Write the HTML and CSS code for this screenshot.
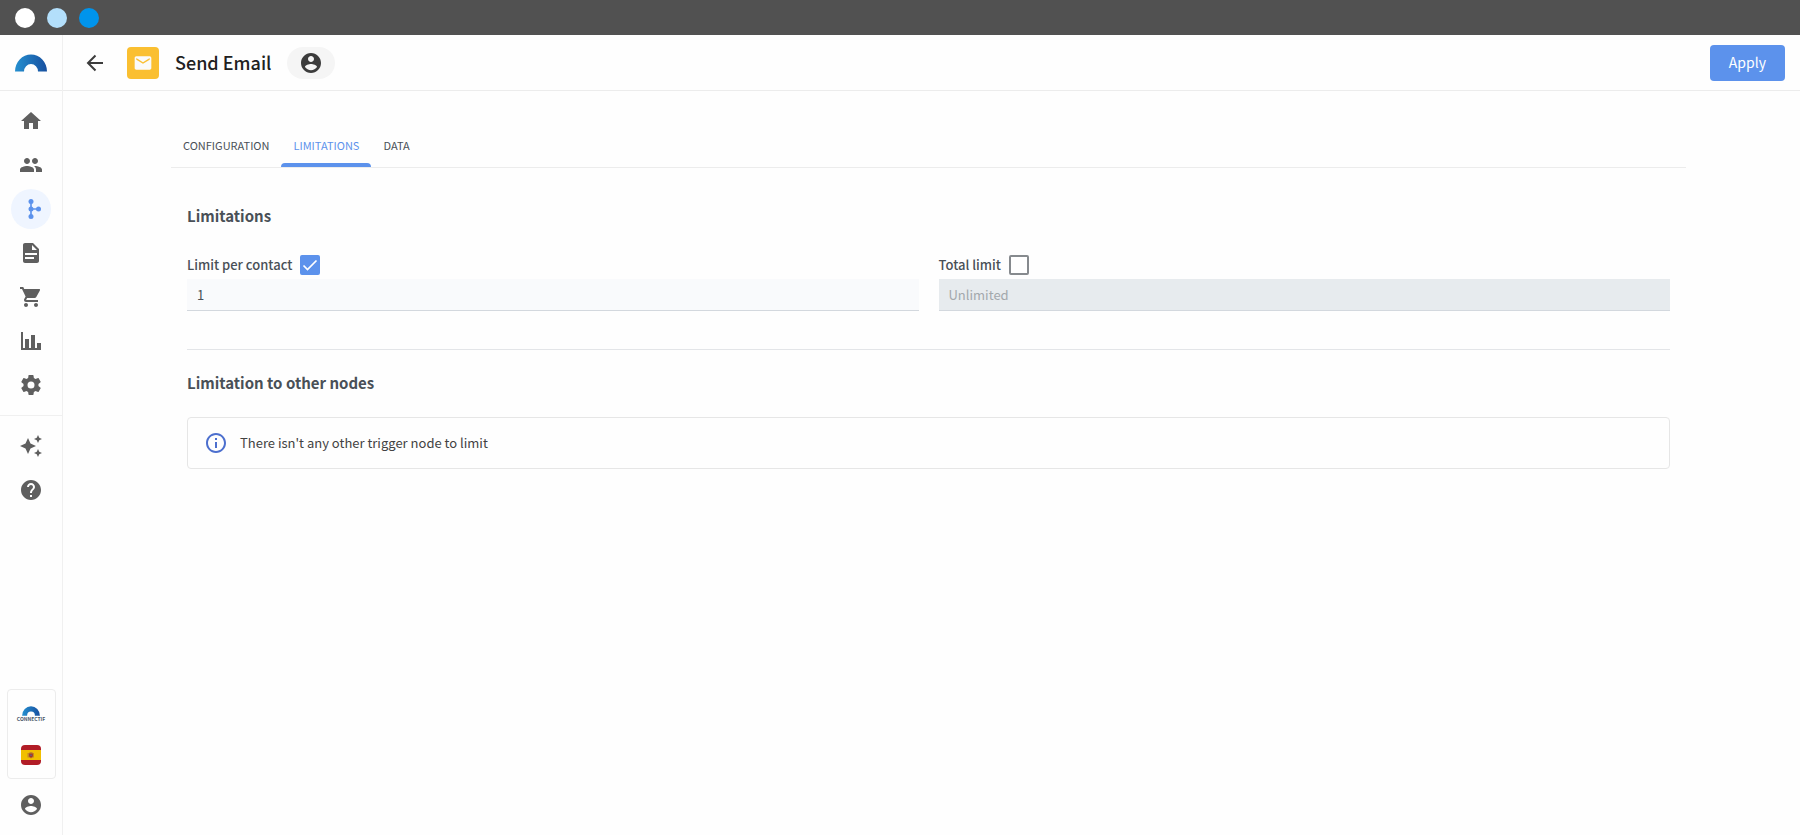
FILE: index.html
```html
<!DOCTYPE html>
<html lang="en">
<head>
    <meta charset="UTF-8">
    <meta name="viewport" content="width=device-width, initial-scale=1.0">
    <title>Send Email - Connectif</title>
    <link rel="stylesheet" href="styles.css">
</head>
<body>
    <!-- Window bar -->
    <div class="window-bar">
        <span class="dot dot-white"></span>
        <span class="dot dot-light"></span>
        <span class="dot dot-blue"></span>
    </div>

    <div class="app">
        <!-- Sidebar -->
        <aside class="sidebar">
            <a class="logo" href="#" aria-label="Connectif">
                <svg width="32" height="18" viewBox="0 0 32 18">
                    <defs>
                        <linearGradient id="arc" x1="0" y1="0" x2="1" y2="0">
                            <stop offset="0" stop-color="#2590d0"/>
                            <stop offset="1" stop-color="#174f9f"/>
                        </linearGradient>
                    </defs>
                    <path fill="url(#arc)" d="M0 17.500A16 17 0 0 1 32 17.500H23A7 7.500 0 0 0 9 17.500Z"/>
                </svg>
            </a>

            <nav class="nav">
                <a class="nav-item" href="#" aria-label="Home">
                    <svg viewBox="0 0 24 24"><path d="M10 20v-6h4v6h5v-8h3L12 3 2 12h3v8z"/></svg>
                </a>
                <a class="nav-item" href="#" aria-label="Contacts">
                    <svg viewBox="0 0 24 24"><path d="M16 11c1.660 0 2.990-1.340 2.990-3S17.660 5 16 5s-3 1.340-3 3 1.340 3 3 3zm-8 0c1.660 0 2.990-1.340 2.990-3S9.660 5 8 5 5 6.340 5 8s1.340 3 3 3zm0 2c-2.330 0-7 1.170-7 3.500V19h14v-2.500c0-2.330-4.670-3.500-7-3.500zm8 0c-.29 0-.62.02-.97.05 1.160.84 1.970 1.970 1.970 3.450V19h6v-2.500c0-2.330-4.670-3.500-7-3.500z"/></svg>
                </a>
                <a class="nav-item active" href="#" aria-label="Workflows">
                    <svg viewBox="0 0 24 24"><circle cx="12" cy="3" r="3"/><circle cx="12" cy="12" r="3"/><circle cx="12" cy="21" r="3"/><circle cx="21" cy="12" r="3"/><path d="M11 3h2v8h8v2h-8v8h-2z"/></svg>
                </a>
                <a class="nav-item" href="#" aria-label="Content">
                    <svg viewBox="0 0 24 24"><path d="M14 2H6c-1.100 0-2 .9-2 2v16c0 1.100.9 2 2 2h12c1.100 0 2-.9 2-2V8zm-1 2l5 5h-5zM6 12h12v2H6zm0 4h9v2H6z" fill-rule="evenodd"/></svg>
                </a>
                <a class="nav-item" href="#" aria-label="Store">
                    <svg viewBox="0 0 24 24"><path d="M7 18c-1.100 0-1.990.9-1.990 2S5.900 22 7 22s2-.9 2-2-.9-2-2-2zM1 2v2h2l3.600 7.590-1.350 2.450c-.16.28-.25.61-.25.96 0 1.100.9 2 2 2h12v-2H7.420c-.14 0-.25-.11-.25-.25l.03-.12.9-1.630h7.450c.75 0 1.410-.41 1.750-1.030l3.580-6.490A1 1 0 0 0 20 4H5.210l-.94-2H1zm16 16c-1.100 0-1.990.9-1.990 2s.89 2 1.990 2 2-.9 2-2-.9-2-2-2z"/></svg>
                </a>
                <a class="nav-item" href="#" aria-label="Reports">
                    <svg viewBox="0 0 24 24"><path d="M22 21H2V3h2v16h2v-9h4v9h2V6h4v13h2v-5h4z"/></svg>
                </a>
                <a class="nav-item" href="#" aria-label="Settings">
                    <svg viewBox="0 0 24 24"><path d="M12 15.500A3.500 3.500 0 0 1 8.500 12 3.500 3.500 0 0 1 12 8.500a3.500 3.500 0 0 1 3.500 3.500 3.500 3.500 0 0 1-3.500 3.500m7.430-2.530c.04-.32.07-.64.07-.97s-.03-.66-.07-1l2.110-1.630c.19-.15.24-.42.12-.64l-2-3.460c-.12-.22-.39-.31-.61-.22l-2.490 1c-.52-.39-1.060-.73-1.690-.98l-.37-2.650A.506.506 0 0 0 14 2h-4c-.25 0-.46.18-.5.42l-.37 2.650c-.63.25-1.170.59-1.690.98l-2.490-1c-.22-.09-.49 0-.61.22l-2 3.460c-.13.22-.07.49.12.64L4.570 11c-.04.34-.07.67-.07 1s.03.65.07.97l-2.110 1.660c-.19.15-.25.42-.12.64l2 3.460c.12.22.39.3.61.22l2.490-1.010c.52.4 1.060.74 1.690.99l.37 2.650c.04.24.25.42.5.42h4c.25 0 .46-.18.5-.42l.37-2.650c.63-.26 1.170-.59 1.690-.99l2.490 1.010c.22.08.49 0 .61-.22l2-3.460c.12-.22.07-.49-.12-.64z"/></svg>
                </a>
            </nav>

            <nav class="nav nav-extra">
                <a class="nav-item" href="#" aria-label="AI assistant">
                    <svg viewBox="0 0 24 24"><path d="M9 4l2.500 5.500L17 12l-5.500 2.500L9 20l-2.500-5.500L1 12l5.500-2.500zM19 1l1.250 2.750L23 5l-2.750 1.250L19 9l-1.240-2.750L15 5l2.760-1.250zM19 15l1.250 2.750L23 19l-2.750 1.250L19 23l-1.240-2.750L15 19l2.760-1.250z"/></svg>
                </a>
                <a class="nav-item" href="#" aria-label="Help">
                    <svg viewBox="0 0 24 24"><path d="M12 2C6.480 2 2 6.480 2 12s4.480 10 10 10 10-4.480 10-10S17.520 2 12 2zm1 17h-2v-2h2zm2.070-7.750l-.9.920C13.450 12.900 13 13.500 13 15h-2v-.5c0-1.100.45-2.100 1.170-2.830l1.240-1.260c.37-.36.59-.86.59-1.410 0-1.100-.9-2-2-2s-2 .9-2 2H8c0-2.210 1.790-4 4-4s4 1.790 4 4c0 .88-.36 1.680-.93 2.250z"/></svg>
                </a>
            </nav>

            <div class="sidebar-bottom">
                <div class="account-card">
                    <a class="brand" href="#">
                        <svg width="18" height="10" viewBox="0 0 32 18"><path fill="url(#arc)" d="M0 17.500A16 17 0 0 1 32 17.500H23A7 7.500 0 0 0 9 17.500Z"/></svg>
                        <span>CONNECTIF</span>
                    </a>
                    <button class="flag" type="button" aria-label="Spain">
                        <svg width="20" height="20" viewBox="0 0 20 20">
                            <rect width="20" height="20" rx="4" fill="#b11c26"/>
                            <rect y="5" width="20" height="10" fill="#f1bf00"/>
                            <path d="M8.500 7h3v1h1.500v4.500H12l-2 1-2-1H6.500V8h2z" fill="#c48a25"/>
                            <path d="M8.200 8.500h3.600v3L10 12.800l-1.800-1.300z" fill="#a63226"/>
                            <circle cx="10" cy="10.300" r="1" fill="#6b5b7b"/>
                        </svg>
                    </button>
                </div>
                <a class="nav-item" href="#" aria-label="My account">
                    <svg viewBox="0 0 24 24"><path d="M12 2C6.480 2 2 6.480 2 12s4.480 10 10 10 10-4.480 10-10S17.520 2 12 2zm0 3c1.660 0 3 1.340 3 3s-1.340 3-3 3-3-1.340-3-3 1.340-3 3-3zm0 14.200c-2.500 0-4.710-1.280-6-3.220.03-1.990 4-3.080 6-3.080 1.990 0 5.970 1.090 6 3.080-1.290 1.940-3.500 3.220-6 3.220z"/></svg>
                </a>
            </div>
        </aside>

        <div class="main">
            <!-- Header -->
            <header class="header">
                <button class="back" type="button" aria-label="Back">
                    <svg width="24" height="24" viewBox="0 0 24 24"><path d="M20 12H5.500M12.500 4.500L5 12l7.500 7.500" fill="none" stroke="#3c3c3c" stroke-width="2"/></svg>
                </button>
                <span class="node-icon">
                    <svg width="20" height="20" viewBox="0 0 24 24"><path d="M20 4H4c-1.100 0-1.990.9-1.990 2L2 18c0 1.100.9 2 2 2h16c1.100 0 2-.9 2-2V6c0-1.100-.9-2-2-2zm0 4l-8 5-8-5V6l8 5 8-5z" fill="#fafafa"/></svg>
                </span>
                <h1>Send Email</h1>
                <button class="contact-chip" type="button" aria-label="Contact">
                    <svg width="24" height="24" viewBox="0 0 24 24"><path d="M12 2C6.480 2 2 6.480 2 12s4.480 10 10 10 10-4.480 10-10S17.520 2 12 2zm0 3c1.660 0 3 1.340 3 3s-1.340 3-3 3-3-1.340-3-3 1.340-3 3-3zm0 14.200c-2.500 0-4.710-1.280-6-3.220.03-1.990 4-3.080 6-3.080 1.990 0 5.970 1.090 6 3.080-1.290 1.940-3.500 3.220-6 3.220z"/></svg>
                </button>
                <button class="apply" type="button">Apply</button>
            </header>

            <main class="content">
                <div class="tabs" role="tablist">
                    <button class="tab" type="button" role="tab" aria-selected="false">CONFIGURATION</button>
                    <button class="tab selected" type="button" role="tab" aria-selected="true">LIMITATIONS</button>
                    <button class="tab" type="button" role="tab" aria-selected="false">DATA</button>
                </div>

                <div class="panel">
                    <section class="limits">
                        <h2>Limitations</h2>
                        <div class="fields">
                            <div class="field">
                                <div class="field-label">
                                    <label for="limit-contact-on">Limit per contact</label>
                                    <input type="checkbox" id="limit-contact-on" checked>
                                </div>
                                <input class="text-input" type="text" value="1" aria-label="Limit per contact value">
                            </div>
                            <div class="field">
                                <div class="field-label">
                                    <label for="limit-total-on">Total limit</label>
                                    <input type="checkbox" id="limit-total-on">
                                </div>
                                <input class="text-input" type="text" placeholder="Unlimited" aria-label="Total limit value" disabled>
                            </div>
                        </div>
                    </section>

                    <section class="other-nodes">
                        <h2>Limitation to other nodes</h2>
                        <div class="info-box">
                            <svg width="24" height="24" viewBox="0 0 24 24"><path d="M11 7h2v2h-2zm0 4h2v6h-2zm1-9C6.480 2 2 6.480 2 12s4.480 10 10 10 10-4.480 10-10S17.520 2 12 2zm0 18c-4.410 0-8-3.590-8-8s3.590-8 8-8 8 3.590 8 8-3.590 8-8 8z"/></svg>
                            <p>There isn't any other trigger node to limit</p>
                        </div>
                    </section>
                </div>
            </main>
        </div>
    </div>
</body>
</html>
```
FILE: styles.css
```css
* {
    margin: 0;
    padding: 0;
    box-sizing: border-box;
}

body {
    font-family: "Noto Sans CJK SC", "Noto Sans", sans-serif;
    font-size: 13px;
    line-height: 20px;
    color: #495057;
    background-color: #fefefe;
    min-height: 100vh;
    display: flex;
    flex-direction: column;
}

button,
input {
    font: inherit;
    border: none;
}

button {
    background: none;
    cursor: pointer;
}

svg {
    display: block;
}

/* Window bar */
.window-bar {
    height: 35px;
    padding: 0 15px;
    background-color: #515151;
    display: flex;
    align-items: center;
    gap: 12px;
}

.dot {
    width: 20px;
    height: 20px;
    border-radius: 50%;
}

.dot-white {
    background-color: #fff;
}

.dot-light {
    background-color: #b3dffb;
}

.dot-blue {
    background-color: #0094ec;
}

.app {
    flex: 1;
    display: flex;
}

/* Sidebar */
.sidebar {
    width: 63px;
    border-right: 1px solid #f0f0f0;
    display: flex;
    flex-direction: column;
}

.logo {
    height: 56px;
    border-bottom: 1px solid #ececec;
    display: flex;
    align-items: center;
    justify-content: center;
}

.nav {
    padding: 10px 0;
    display: flex;
    flex-direction: column;
    align-items: center;
    gap: 4px;
}

.nav-extra {
    border-top: 1px solid #f0f0f0;
}

.nav-item {
    width: 40px;
    height: 40px;
    border-radius: 50%;
    display: flex;
    align-items: center;
    justify-content: center;
    fill: #5f5f5f;
}

.nav-item svg {
    width: 24px;
    height: 24px;
}

.nav-item.active {
    background-color: #eff5ff;
    fill: #5c92ec;
}

.nav-item.active svg {
    width: 20px;
    height: 20px;
}

.sidebar-bottom {
    margin-top: auto;
    padding-bottom: 10px;
    display: flex;
    flex-direction: column;
    align-items: center;
    gap: 6px;
}

.account-card {
    width: 49px;
    height: 90px;
    border: 1px solid #ececec;
    border-radius: 4px;
    display: flex;
    flex-direction: column;
    align-items: center;
    justify-content: space-between;
    padding: 16px 0 13px;
}

.brand {
    display: flex;
    flex-direction: column;
    align-items: center;
    color: #4a5568;
    font-size: 5px;
    font-weight: 700;
    line-height: 6px;
    text-decoration: none;
}

/* Header */
.main {
    flex: 1;
    min-width: 0;
}

.header {
    height: 56px;
    padding: 0 15px 0 20px;
    border-bottom: 1px solid #ececec;
    display: flex;
    align-items: center;
}

.node-icon {
    width: 32px;
    height: 32px;
    margin: 0 16px 0 20px;
    border-radius: 4px;
    background-color: #fabf31;
    display: flex;
    align-items: center;
    justify-content: center;
}

h1 {
    padding-bottom: 2px;
    font-size: 18px;
    font-weight: 500;
    line-height: 28px;
    color: #212121;
}

.contact-chip {
    width: 48px;
    height: 32px;
    margin-left: 16px;
    border-radius: 16px;
    background-color: #f5f5f5;
    display: flex;
    align-items: center;
    justify-content: center;
    fill: #3c3c3c;
}

.apply {
    height: 36px;
    margin-left: auto;
    padding: 0 19px 2px;
    border-radius: 4px;
    background-color: #5c92ec;
    color: #fff;
    font-size: 14px;
}

/* Tabs */
.content {
    padding: 32px 114px 32px 108px;
}

.tabs {
    border-bottom: 1px solid #ececec;
    display: flex;
}

.tab {
    height: 44px;
    padding: 4px 12px 0;
    border-bottom: 4px solid transparent;
    color: #495057;
    font-size: 11px;
}

.tab.selected {
    color: #5c92ec;
    position: relative;
}

.tab.selected::after {
    content: "";
    position: absolute;
    left: 0;
    right: 0;
    bottom: -4px;
    height: 4px;
    border-radius: 4px 4px 0 0;
    background-color: #5c92ec;
}

/* Limitations */
.panel {
    padding: 36px 16px 0;
}

h2 {
    font-size: 15px;
    font-weight: 700;
    line-height: 24px;
    color: #495057;
}

.limits {
    padding-bottom: 38px;
    border-bottom: 1px solid #e3e5e8;
}

.fields {
    margin-top: 24px;
    display: grid;
    grid-template-columns: 1fr 1fr;
    gap: 20px;
}

.field-label {
    height: 26px;
    margin-bottom: 1px;
    display: flex;
    align-items: center;
    gap: 8px;
    font-weight: 500;
}

input[type="checkbox"] {
    appearance: none;
    width: 20px;
    height: 20px;
    border: 2px solid #868a8e;
    border-radius: 2px;
    background-color: #fff;
}

input[type="checkbox"]:checked {
    border-color: #5c92ec;
    background: #5c92ec url("data:image/svg+xml,%3Csvg xmlns='http://www.w3.org/2000/svg' viewBox='0 0 16 16'%3E%3Cpath d='M1.500 8.500l4 4 9-9' fill='none' stroke='white' stroke-width='1.700'/%3E%3C/svg%3E") center / 16px 16px no-repeat;
}

.text-input {
    display: block;
    width: 100%;
    height: 32px;
    padding: 0 10px;
    border-bottom: 1px solid #d3d8de;
    background-color: #f9fafc;
    color: #495057;
}

.text-input:disabled {
    background-color: #e7ebee;
}

.text-input::placeholder {
    color: #a3a8ac;
}

/* Other nodes */
.other-nodes {
    padding-top: 21px;
}

.info-box {
    margin-top: 22px;
    padding: 13px 16px;
    border: 1px solid #e6e6e6;
    border-radius: 4px;
    display: flex;
    align-items: center;
    gap: 12px;
    color: #424242;
    fill: #4c6fce;
}
```
